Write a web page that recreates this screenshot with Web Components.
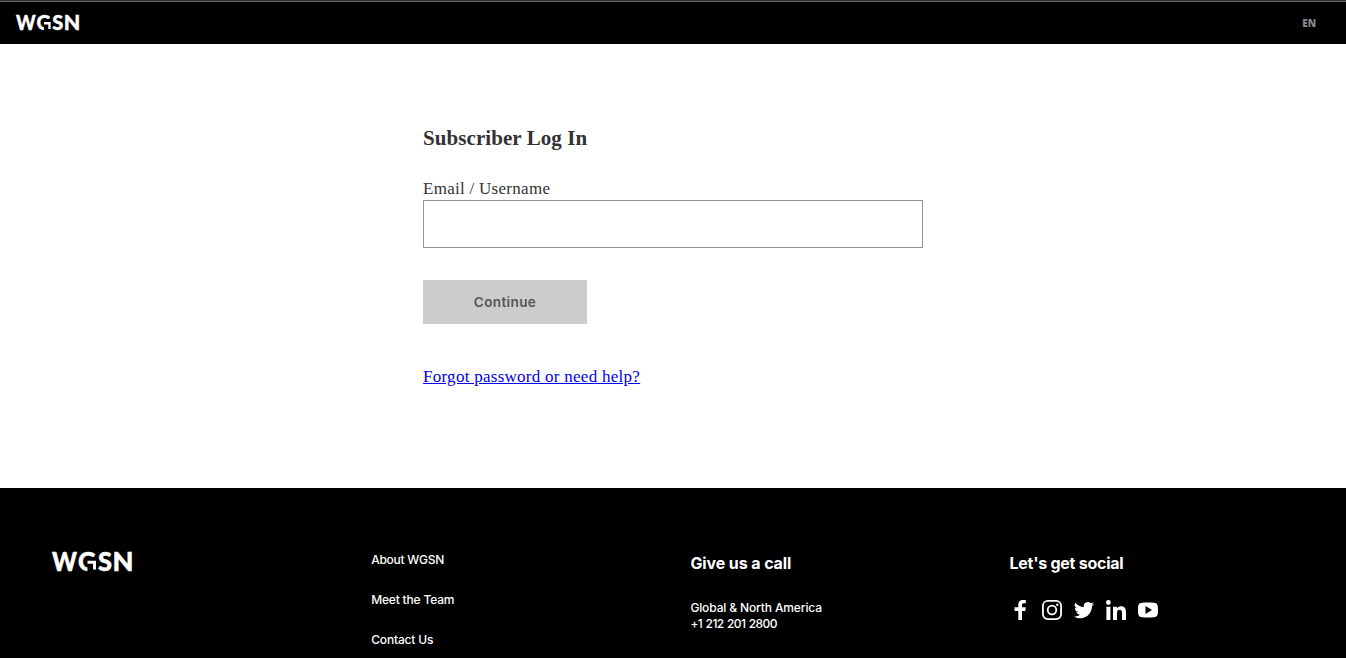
<!DOCTYPE html>
<html lang="en">
<head>
<meta charset="utf-8">
<title>WGSN Log In</title>
<style>
body{margin:0;background:#fff;font-family:Inter,"Liberation Sans",sans-serif;overflow:hidden}
</style>
</head>
<body>
<login-page></login-page>
<script>
function define(name, html){
  const t=document.createElement('template');
  t.innerHTML=html;
  customElements.define(name,class extends HTMLElement{
    constructor(){super();this.attachShadow({mode:'open'}).append(t.content.cloneNode(true));}
  });
}
define('brand-logo',`<style>
:host{display:block;width:80px;height:20px}svg{display:block;width:100%;height:100%;overflow:visible}
text{font:900 26.500px Lato,sans-serif;fill:#fff;stroke:#fff;stroke-width:.5}
</style><svg viewBox="0 0 80 20"><text y="19.3" x="0" textLength="25" lengthAdjust="spacingAndGlyphs">W</text><text y="19.3" x="26" textLength="18" lengthAdjust="spacingAndGlyphs">G</text><path d="M35.500 6.500H46V21H35.500z" fill="#000"/><path d="M35.500 10.300h7v7.200" fill="none" stroke="#fff" stroke-width="3"/><text y="19.300" x="46" textLength="14" lengthAdjust="spacingAndGlyphs">S</text><text y="19.300" x="60.500" textLength="21" lengthAdjust="spacingAndGlyphs">N</text></svg>`);
define('site-header',`<style>
:host{display:flex;box-sizing:border-box;height:44px;background:linear-gradient(#333 0 1px,#666 1px 2px,#000 2px);padding:2px 30px 0 16px;align-items:center;justify-content:space-between}
brand-logo{width:63px;height:16px;margin-top:-1px}
span{font:800 10px/12px "Open Sans",sans-serif;color:#888}
</style><brand-logo></brand-logo><span>EN</span>`);
define('text-field',`<style>
:host{display:block;font:17px/24px "Liberation Serif",serif;color:#333}
label{display:block;letter-spacing:.28px;padding-top:1px;margin-bottom:-1px}
input{display:block;box-sizing:border-box;width:500px;height:48px;border:1px solid #949494;border-radius:0;background:#fff;padding:0 12px;font:inherit}
</style><label for="f"><slot></slot></label><input id="f">`);
define('action-button',`<style>
:host{display:block}
button{display:block;width:164px;height:44px;border:0;padding:0;background:#ccc;color:#555;font:600 13.500px/44px Inter,sans-serif;letter-spacing:.4px}
</style><button><slot></slot></button>`);
define('login-form',`<style>
:host{display:block;box-sizing:border-box;width:500px;height:444px;margin:0 auto;padding-top:80px}
h1{margin:0 0 24px;font:bold 21px/28px "Liberation Serif",serif;color:#333;letter-spacing:.07px}
action-button{margin:32px 0 41px}
a{font:17px/24px "Liberation Serif",serif;color:#00e;letter-spacing:.270px;text-decoration:underline}
</style><h1>Subscriber Log In</h1><text-field>Email / Username</text-field><action-button>Continue</action-button><a href="#">Forgot password or need help?</a>`);
define('footer-column',`<style>
:host{display:block;color:#fff;font:500 12px/16px Inter,sans-serif;letter-spacing:-.130px}
h2{margin:-1px 0 25px;font:700 16px/24px Inter,sans-serif;letter-spacing:-.1px}
</style><h2><slot name="title"></slot></h2><slot></slot>`);
define('footer-links',`<style>
:host{display:flex;flex-direction:column;gap:24px;color:#fff;font:500 12px/16px Inter,sans-serif;letter-spacing:-.180px}
</style><slot></slot>`);
define('social-icons',`<style>
:host{display:flex;gap:8px;margin-top:-2px}svg{display:block;width:24px;height:24px;fill:#fff}
</style>
<svg viewBox="0 0 24 24" style="margin-left:-2px"><path d="M10.300 22v-9H6.500V9.200h3.800V6.600C10.300 3.500 12 2 14.700 2H17.800v3.300h-2c-1.500 0-1.800.8-1.800 1.800v2.100h3.800l-.5 3.800H14v9z"/></svg>
<svg viewBox="0 0 24 24"><rect x="2.900" y="2.900" width="18.200" height="18.200" rx="5" fill="none" stroke="#fff" stroke-width="1.800"/><circle cx="12" cy="12" r="4.300" fill="none" stroke="#fff" stroke-width="1.800"/><circle cx="17.300" cy="6.700" r="1.200"/></svg>
<svg viewBox="0 0 24 24"><path d="M22 5.900a8 8 0 0 1-2.360.650 4.100 4.100 0 0 0 1.800-2.270 8.200 8.200 0 0 1-2.600 1A4.100 4.100 0 0 0 11.850 9 11.650 11.650 0 0 1 3.390 4.720a4.100 4.100 0 0 0 1.270 5.480 4 4 0 0 1-1.860-.510v.050a4.100 4.100 0 0 0 3.290 4.020 4.100 4.100 0 0 1-1.850.070 4.100 4.100 0 0 0 3.830 2.850A8.230 8.230 0 0 1 2 18.380a11.600 11.600 0 0 0 6.290 1.840c7.550 0 11.670-6.250 11.670-11.670v-.530A8.300 8.300 0 0 0 22 5.900z"/></svg>
<svg viewBox="0 0 24 24"><circle cx="4.400" cy="4.500" r="2.400"/><path d="M2.400 8.700h4V22h-4zM9 8.700h3.900v1.800c.7-1.200 2-2.200 4-2.200 4.100 0 5.100 2.700 5.100 6.300V22h-4v-6.600c0-1.700-.2-3.600-2.400-3.600S13 13.500 13 15.300V22H9z"/></svg>
<svg viewBox="0 0 24 24"><path fill-rule="evenodd" d="M12 4.500c9.100 0 10 .1 10 7.500s-.9 7.500-10 7.500S2 19.400 2 12s.9-7.500 10-7.500zM9.500 8v8l6.500-4z"/></svg>`);
define('site-footer',`<style>
:host{display:grid;grid-template-columns:repeat(4,319.200px);box-sizing:border-box;height:170px;background:#000;padding:64px 0 0 52px;overflow:hidden}
</style><brand-logo></brand-logo>
<footer-links><span style="letter-spacing:-.25px">About WGSN</span><span>Meet the Team</span><span>Contact Us</span></footer-links>
<footer-column><span slot="title">Give us a call</span>Global &amp; North America<br><span style="letter-spacing:-.57px;word-spacing:.7px">+1 212 201 2800</span></footer-column>
<footer-column><span slot="title" style="letter-spacing:-.26px">Let's get social</span><social-icons></social-icons></footer-column>`);
define('login-page',`<style>:host{display:block}</style><site-header></site-header><login-form></login-form><site-footer></site-footer>`);
</script>
</body>
</html>
